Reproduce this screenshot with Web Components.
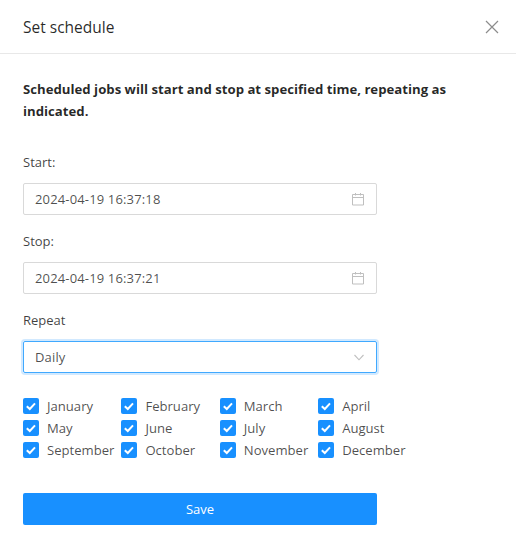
<!DOCTYPE html>
<html>
<head>
<meta charset="utf-8">
<title>Set schedule</title>
<style>
  html, body { margin: 0; padding: 0; background: #fff; }
  body { font-family: "Open Sans", "Noto Sans", sans-serif; font-size: 14px; color: rgba(0,0,0,.65); }
</style>
</head>
<body>
<schedule-dialog>
  <date-field label="Start:" value="2024-04-19 16:37:18"></date-field>
  <date-field label="Stop:" value="2024-04-19 16:37:21"></date-field>
  <select-field label="Repeat" value="Daily"></select-field>
  <month-grid></month-grid>
</schedule-dialog>

<script>
class ScheduleDialog extends HTMLElement {
  constructor() {
    super();
    this.attachShadow({ mode: 'open' });
  }

  connectedCallback() {
    this.shadowRoot.innerHTML = `
      <style>
        :host { display: block; width: 516px; height: 549px; overflow: hidden; box-sizing: border-box; }
        header {
          height: 53px;
          border-bottom: 1px solid #e8e8e8;
          padding: 0 17px 0 23px;
          display: flex;
          align-items: center;
          justify-content: space-between;
        }
        h1 { margin: 0; padding-top: 2px; font-size: 15.5px; font-weight: 400; color: rgba(0,0,0,.85); line-height: 51px; }
        svg { display: block; }
        main { padding: 24px 23px 0; }
        p { margin: 0 0 29px; font-size: 13.2px; font-weight: 700; line-height: 22px; color: rgba(0,0,0,.85); width: 450px; }
        button {
          display: block;
          width: 354px;
          height: 32px;
          margin-top: 32px;
          border: 0;
          border-radius: 2px;
          background: #1890ff;
          color: #fff;
          font: inherit;
          font-size: 13px;
          font-weight: 500;
          padding: 0;
        }
      </style>
      <header>
        <h1>Set schedule</h1>
        <svg width="14" height="14" viewBox="0 0 14 14"><path d="M1 1l12 12M13 1l-12 12" stroke="#8c8c8c" stroke-width="1.2" fill="none"/></svg>
      </header>
      <main>
        <p>Scheduled jobs will start and stop at specified time, repeating as indicated.</p>
        <slot></slot>
        <button>Save</button>
      </main>
    `;
  }
}

const fieldStyle = `
  :host { display: block; width: 354px; margin-bottom: 15px; }
  label { display: block; font-size: 13px; line-height: 22px; height: 22px; margin-bottom: 10px; color: rgba(0,0,0,.75); }
  .box {
    box-sizing: border-box;
    height: 32px;
    border: 1px solid #d9d9d9;
    border-radius: 2px;
    padding: 0 11px;
    display: flex;
    align-items: center;
    justify-content: space-between;
    font-size: 13px;
    letter-spacing: .15px;
    color: rgba(0,0,0,.7);
  }
  svg { display: block; }
`;

class DateField extends HTMLElement {
  constructor() {
    super();
    this.attachShadow({ mode: 'open' });
  }

  connectedCallback() {
    this.shadowRoot.innerHTML = `
      <style>${fieldStyle}</style>
      <label>${this.getAttribute('label')}</label>
      <div class="box">
        <span>${this.getAttribute('value')}</span>
        <svg width="14" height="14" viewBox="0 0 14 14" fill="none" stroke="#bfbfbf" stroke-width="1">
          <path d="M1.5 2.5h11v10.5h-11zM1.5 5.5h11M4.5 1v2.5M9.5 1v2.5"/>
        </svg>
      </div>
    `;
  }
}

class SelectField extends HTMLElement {
  constructor() {
    super();
    this.attachShadow({ mode: 'open' });
  }

  connectedCallback() {
    this.shadowRoot.innerHTML = `
      <style>${fieldStyle}
        :host { margin-bottom: 0; }
        .box { border-color: #40a9ff; box-shadow: 0 0 0 2px rgba(24,144,255,.2); }
      </style>
      <label>${this.getAttribute('label')}</label>
      <div class="box">
        <span>${this.getAttribute('value')}</span>
        <svg width="12" height="12" viewBox="0 0 12 12" fill="none" stroke="#bfbfbf" stroke-width="1.1">
          <path d="M1.5 4l4.5 4.8 4.5-4.8"/>
        </svg>
      </div>
    `;
  }
}

class MonthGrid extends HTMLElement {
  constructor() {
    super();
    this.attachShadow({ mode: 'open' });
  }

  connectedCallback() {
    const months = ['January', 'February', 'March', 'April', 'May', 'June', 'July', 'August',
      'September', 'October', 'November', 'December'];
    this.shadowRoot.innerHTML = `
      <style>
        :host { display: grid; grid-template-columns: repeat(4, 98.4px); grid-auto-rows: 22px; margin-top: 22px; }
        div { display: flex; align-items: center; font-size: 13.1px; color: rgba(0,0,0,.7); white-space: nowrap; }
        i { display: block; width: 16px; height: 16px; border-radius: 2px; background: #1890ff; margin-right: 8px; flex: none; }
        svg { display: block; }
      </style>
      ${months.map(m => `
        <div><i><svg width="16" height="16" viewBox="0 0 16 16"><path d="M3.8 8.2l3 2.8 5.2-5.6" fill="none" stroke="#fff" stroke-width="2"/></svg></i><span>${m}</span></div>
      `).join('')}
    `;
  }
}

customElements.define('schedule-dialog', ScheduleDialog);
customElements.define('date-field', DateField);
customElements.define('select-field', SelectField);
customElements.define('month-grid', MonthGrid);
</script>
</body>
</html>
